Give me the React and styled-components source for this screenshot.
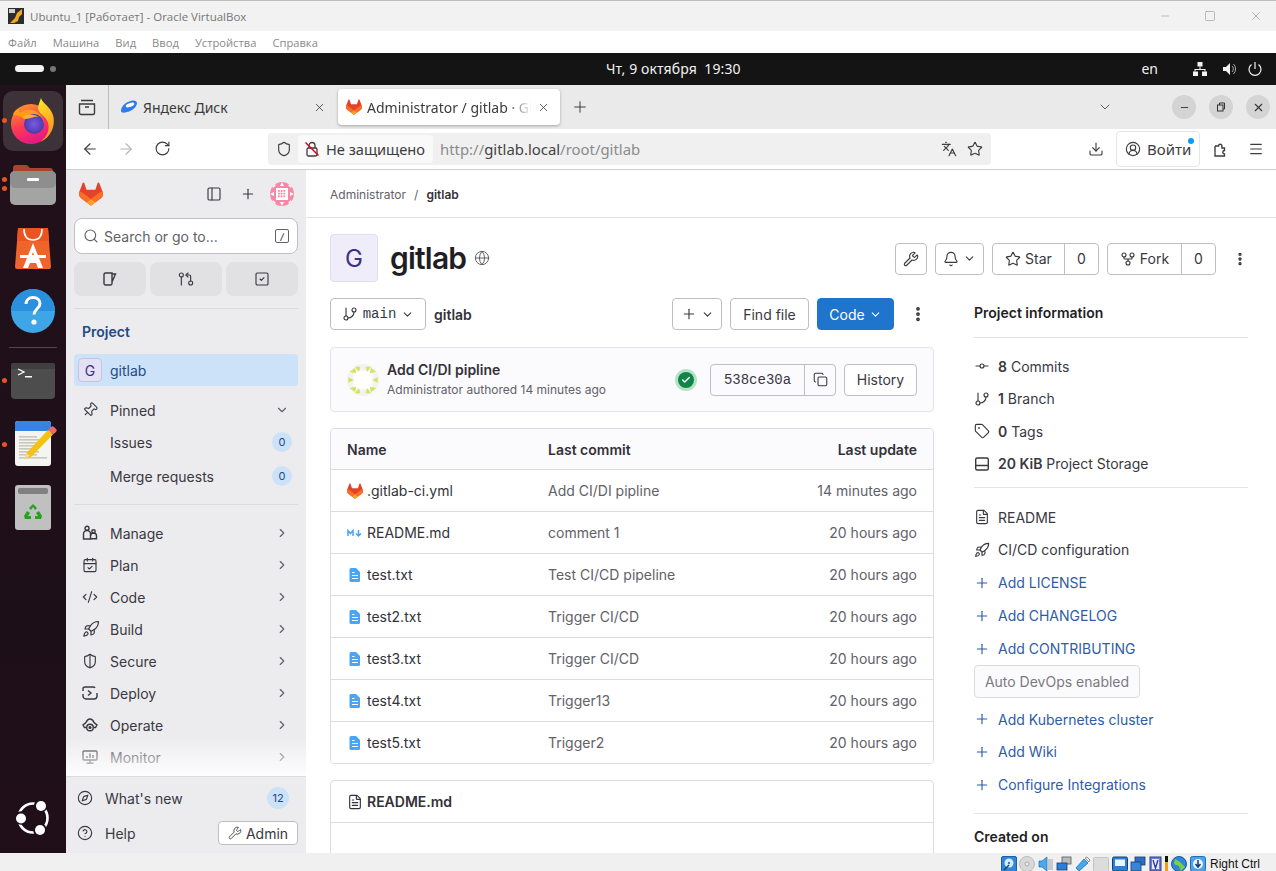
import React from "react";
import styled, { createGlobalStyle } from "styled-components";
import {
  Search, Plus, ChevronRight, ChevronDown, Pin, Wrench, Bell, Star, GitFork, GitBranch,
  GitCommitHorizontal, Tag, FileText, Rocket, Globe, Copy, Compass, CircleHelp, X,
  ArrowLeft, ArrowRight, RotateCw, Shield, Languages, Download, CircleUserRound, Menu,
  PanelLeft, SquareCheck, GitPullRequestArrow, CodeXml, CalendarCheck, ShieldHalf,
  EllipsisVertical, Minus, Square, Check,
} from "lucide-react";

const Global = createGlobalStyle`
  html, body { margin: 0; padding: 0; background: #fff; }
  body { font-family: Inter, "Liberation Sans", sans-serif; font-size: 14px; color: #333238; }
  * { box-sizing: border-box; }
`;

const Screen = styled.div`width:1276px;height:871px;display:flex;flex-direction:column;overflow:hidden;`;

/* VirtualBox chrome */
const TitleBar = styled.div`height:31px;background:#f2f2f2;border-top:1px solid #bdbdbd;display:flex;align-items:center;padding:0 8px;gap:6px;color:#777;font:11.5px "Open Sans","Noto Sans",sans-serif;`;
const TitleText = styled.span`flex:1;`;
const WinControls = styled.div`display:flex;gap:33px;align-items:center;margin-right:5px;color:#808080;`;
const MenuBar = styled.div`height:22px;background:#fff;display:flex;align-items:center;padding-left:8px;gap:16px;color:#8a8a8a;font:11.2px "Open Sans","Noto Sans",sans-serif;`;
const GnomeBar = styled.div`height:32px;background:#141414;position:relative;display:flex;align-items:center;padding:0 13px 1px 15px;color:#f2f2f2;font:14px "Noto Sans",sans-serif;`;
const Pill = styled.span`width:29px;height:7px;border-radius:4px;background:#f4f4f4;`;
const Dot = styled.span`width:6px;height:6px;border-radius:50%;background:#777;margin-left:6px;`;
const Clock = styled.span`position:absolute;left:606px;letter-spacing:.1px;`;
const Tray = styled.div`margin-left:auto;display:flex;align-items:center;gap:10px;`;
const Lang = styled.span`margin-right:24px;`;
const NetWrap = styled.span`display:flex;margin-right:3px;`;
const Desktop = styled.div`height:768px;display:flex;`;

/* Dock */
const Dock = styled.div`width:66px;background:linear-gradient(#22101b,#1d0f17 70%,#200f18);display:flex;flex-direction:column;align-items:center;position:relative;`;
const DockItem = styled.div`height:${p=>p.$h}px;width:60px;display:flex;align-items:center;justify-content:center;position:relative;margin-top:${p=>p.$mt||0}px;padding-left:${p=>p.$pl||0}px;flex:none;border-radius:10px;background:${p=>p.$active?"#3d3238":"transparent"};`;
const RunDot = styled.span`position:absolute;left:${p=>p.$l||2}px;top:${p=>p.$t}px;width:5px;height:5px;border-radius:50%;background:#e95420;`;
const DockRule = styled.div`width:48px;height:1px;background:#55464e;margin-top:10px;flex:none;`;
const DockBottom = styled.div`margin-top:auto;margin-bottom:17px;display:flex;`;

/* Firefox */
const Browser = styled.div`flex:1;display:flex;flex-direction:column;min-width:0;background:#fff;`;
const TabStrip = styled.div`height:44px;background:#eaeaea;display:flex;align-items:center;color:#3b3b3b;font:14px "Noto Sans",sans-serif;`;
const TabViews = styled.div`width:43px;height:44px;display:flex;align-items:center;justify-content:center;border-right:1px solid #bcbcbc;flex:none;`;
const Tab = styled.div`width:${p=>p.$w}px;height:36px;display:flex;align-items:center;gap:${p=>p.$gap||6}px;padding:0 10px 0 ${p=>p.$pl||12}px;flex:none;border-radius:4px;background:${p=>p.$active?"#fff":"transparent"};box-shadow:${p=>p.$active?"0 1px 3px rgba(0,0,0,.3)":"none"};margin-right:2px;`;
const TabLabel = styled.span`flex:1;white-space:nowrap;overflow:hidden;`;
const FadedLabel = styled(TabLabel)`-webkit-mask-image:linear-gradient(90deg,#000 85%,transparent);mask-image:linear-gradient(90deg,#000 85%,transparent);`;
const NewTab = styled.div`width:36px;display:flex;justify-content:center;`;
const StripEnd = styled.div`margin-left:auto;display:flex;align-items:center;`;
const WinBtn = styled.div`width:24px;height:24px;border-radius:50%;background:#d4d4d4;display:flex;align-items:center;justify-content:center;margin-right:${p=>p.$mr||13}px;color:#333;`;
const ListChevron = styled.div`margin-right:59px;display:flex;color:#444;`;
const NavBar = styled.div`height:41px;background:#fff;border-bottom:1px solid #cfcfcf;display:flex;align-items:center;color:#3d3d3d;font:14px "Noto Sans",sans-serif;padding-bottom:1px;`;
const NavBtn = styled.div`width:36px;display:flex;justify-content:center;color:${p=>p.$dim?"#b4b4b4":"#3d3d3d"};flex:none;`;
const NavGroup = styled.div`display:flex;margin-left:6px;margin-right:4px;`;
const UrlBar = styled.div`width:723px;height:32px;background:#f0f0f0;border-radius:4px;display:flex;align-items:center;padding:0 8px;margin-left:84px;flex:none;font-size:14.6px;`;
const Insecure = styled.div`height:28px;width:135px;margin-left:6px;background:#f9f9f9;border-radius:4px;display:flex;align-items:center;gap:6px;padding-left:6px;white-space:nowrap;`;
const UrlText = styled.span`color:#8b8b8b;margin-left:7px;flex:1;white-space:nowrap;font-size:14.9px;`;
const UrlHost = styled.b`color:#444;font-weight:400;`;
const UrlEnd = styled.div`display:flex;gap:10px;align-items:center;`;
const Login = styled.div`width:84px;height:36px;border:1px solid #e6e6e6;border-radius:4px;display:flex;align-items:center;gap:6px;padding-left:8px;position:relative;margin:0 2px;font-size:15px;`;
const Badge = styled.span`position:absolute;top:6px;right:5px;width:6px;height:6px;border-radius:50%;background:#0a9bf5;`;
const ToolEnd = styled.div`margin-left:auto;display:flex;align-items:center;padding-right:2px;`;

/* GitLab */
const Gitlab = styled.div`flex:1;min-height:0;display:flex;`;
const Sidebar = styled.aside`width:240px;flex:none;background:#ececef;display:flex;flex-direction:column;`;
const SideTop = styled.div`height:48px;padding:0 12px 0 13px;display:flex;align-items:center;flex:none;`;
const SideTopIcons = styled.div`margin-left:auto;display:flex;align-items:center;gap:18px;color:#3a383f;`;
const AvatarSlot = styled.span`display:flex;margin-left:-4px;`;
const SearchBox = styled.div`height:36px;margin:0 8px;background:#fff;border:1px solid #bfbfc3;border-radius:8px;display:flex;align-items:center;gap:5px;padding:0 8px;color:#626168;flex:none;`;
const SearchText = styled.span`flex:1;`;
const SlashKey = styled.span`width:14px;height:14px;border:1.5px solid #626168;border-radius:2px;font-size:9px;display:flex;align-items:center;justify-content:center;font-style:italic;font-weight:700;`;
const QuickRow = styled.div`display:grid;grid-template-columns:repeat(3,72px);gap:4px;margin:8px 8px 0;flex:none;`;
const QuickBtn = styled.div`height:34px;border-radius:8px;background:#e1e1e3;display:flex;align-items:center;justify-content:center;color:#3a383f;`;
const SideRule = styled.div`height:1px;background:#dcdcde;margin:12px 8px 0;flex:none;`;
const SideHead = styled.div`height:45px;display:flex;align-items:center;padding-left:16px;font-weight:600;color:#1f4a85;flex:none;`;
const CurrentRow = styled.div`height:32px;margin:0 8px;border-radius:4px;background:#cbe2f9;display:flex;align-items:center;padding-left:4px;gap:8px;color:#1f4a85;flex:none;`;
const MiniAvatar = styled.span`width:24px;height:24px;border-radius:4px;background:#e4e1f5;border:1px solid #c4c3e2;color:#41307f;display:flex;align-items:center;justify-content:center;`;
const NavArea = styled.div`flex:1;min-height:0;position:relative;overflow:hidden;`;
const NavRow = styled.div`height:32px;margin:${p=>p.$m||0};padding:0 16px;display:flex;align-items:center;color:#3a383f;flex:none;`;
const NavIcon = styled.span`width:28px;display:flex;flex:none;`;
const TiltedIcon = styled(NavIcon)`& > svg{transform:rotate(45deg);}`;
const NavLabel = styled.span`flex:1;`;
const Chev = styled.span`display:flex;color:#626168;margin-right:1px;`;
const Count = styled.span`min-width:20px;height:20px;border-radius:10px;background:#cbe2f9;color:#1f4a85;font-size:11px;display:flex;align-items:center;justify-content:center;margin-right:-2px;`;
const BigCount = styled(Count)`min-width:22px;height:22px;border-radius:11px;margin-right:9px;`;
const Fade = styled.div`position:absolute;left:0;right:0;bottom:0;height:40px;background:linear-gradient(rgba(255,255,255,0),rgba(255,255,255,.9));pointer-events:none;`;
const SideFoot = styled.div`height:77px;border-top:1px solid #dcdcde;padding:5px 8px 0 11px;flex:none;display:flex;flex-direction:column;gap:3px;`;
const FootRow = styled.div`height:32px;display:flex;align-items:center;color:#3a383f;`;
const FootIcon = styled.span`width:28px;display:flex;`;
const AdminBtn = styled.span`width:80px;height:24px;background:#fff;border:1px solid #bfbfc3;border-radius:4px;display:flex;align-items:center;justify-content:center;gap:4px;`;

const Main = styled.main`flex:1;min-width:0;overflow:hidden;background:#fff;`;
const Crumbs = styled.div`height:48px;border-bottom:1px solid #e4e4e6;padding:1px 0 0 24px;display:flex;align-items:center;gap:8px;font-size:12px;color:#626168;`;
const CrumbNow = styled.b`color:#333238;font-weight:600;`;
const Body = styled.div`padding:16px 28px 0 24px;`;
const TitleRow = styled.div`height:48px;display:flex;align-items:center;`;
const BigAvatar = styled.span`width:48px;height:48px;border-radius:4px;background:#f0edfb;border:1px solid #e0dff0;color:#41307f;font-size:24px;display:flex;align-items:center;justify-content:center;flex:none;`;
const H1 = styled.h1`margin:0 8px 0 12px;font-size:30px;line-height:48px;font-weight:600;color:#1f1e24;letter-spacing:-.8px;`;
const Actions = styled.div`margin-left:auto;display:flex;gap:8px;align-items:center;margin-top:1px;`;
const Btn = styled.div`height:32px;width:${p=>p.$w}px;margin-left:${p=>p.$ml||0}px;border:1px solid #bfbfc3;border-radius:4px;background:#fff;display:flex;align-items:center;justify-content:center;gap:${p=>p.$gap||4}px;color:#3a383f;flex:none;`;
const Primary = styled(Btn)`background:#1f75cb;border-color:#1f75cb;color:#fff;`;
const Split = styled.div`display:flex;height:32px;border:1px solid #bfbfc3;border-radius:4px;flex:none;color:#3a383f;`;
const SplitPart = styled.div`width:${p=>p.$w}px;display:flex;align-items:center;justify-content:center;gap:4px;border-left:${p=>p.$div?"1px solid #bfbfc3":"none"};`;
const Kebab = styled.div`width:${p=>p.$w||16}px;display:flex;justify-content:center;margin-left:${p=>p.$ml||0}px;color:#333238;`;
const Columns = styled.div`display:grid;grid-template-columns:604px 274px;column-gap:40px;margin-top:16px;`;
const LeftCol = styled.div`display:flex;flex-direction:column;min-width:0;`;
const BranchRow = styled.div`height:32px;display:flex;align-items:center;gap:8px;`;
const Mono = styled.span`font-family:"Liberation Mono","DejaVu Sans Mono",monospace;font-size:14px;`;
const PathName = styled.b`font-weight:600;flex:1;`;
const CommitBox = styled.div`height:65px;margin-top:17px;border:1px solid #e4e4e6;border-radius:4px;background:#fbfafd;display:flex;align-items:center;padding:0 16px;`;
const CommitText = styled.div`margin-left:8px;flex:1;line-height:20px;`;
const CommitTitle = styled.div`font-weight:600;color:#333238;`;
const CommitMeta = styled.div`font-size:12px;color:#626168;`;
const Status = styled.span`width:22px;height:22px;border-radius:50%;background:#b6e2c5;display:flex;align-items:center;justify-content:center;margin-right:13px;`;
const StatusCore = styled.span`width:16px;height:16px;border-radius:50%;background:#108548;color:#fff;display:flex;align-items:center;justify-content:center;`;
const TableBox = styled.div`margin-top:16px;border:1px solid #dcdcde;border-radius:4px;overflow:hidden;`;
const TRow = styled.div`height:${p=>p.$head?40:42}px;display:grid;grid-template-columns:201px 1fr auto;align-items:center;padding:0 16px;border-top:${p=>p.$head?"none":"1px solid #dcdcde"};background:${p=>p.$head?"#fbfafd":"#fff"};`;
const ThCell = styled.b`font-weight:600;color:#333238;`;
const FileCell = styled.span`display:flex;align-items:center;gap:4px;color:#333238;`;
const Muted = styled.span`color:#626168;`;
const ReadmeBox = styled.div`margin-top:16px;border:1px solid #dcdcde;border-radius:4px;height:200px;`;
const ReadmeHead = styled.div`height:42px;border-bottom:1px solid #dcdcde;display:flex;align-items:center;gap:4px;padding-left:16px;font-weight:600;`;
const RightCol = styled.div`display:flex;flex-direction:column;`;
const InfoHead = styled.div`height:28px;display:flex;align-items:center;font-weight:600;color:#1f1e24;flex:none;`;
const InfoRule = styled.div`height:1px;background:#e4e4e6;flex:none;margin:${p=>p.$m};`;
const InfoRow = styled.div`height:${p=>p.$h||32}px;margin-top:${p=>p.$mt||0}px;display:flex;align-items:center;gap:8px;color:${p=>p.$link?"#2f5ca5":"#3a383f"};flex:none;`;
const InfoNum = styled.b`font-weight:600;`;
const IconBox = styled.span`width:16px;height:16px;display:flex;flex:none;`;
const DevOps = styled.div`width:166px;height:33px;border:1px solid #dcdcde;border-radius:4px;background:#fbfafd;color:#7b7a80;display:flex;align-items:center;justify-content:center;flex:none;`;
const StatusBar = styled.div`height:18px;background:#f0f0f0;display:flex;align-items:center;justify-content:flex-end;padding:3px 4px 0 0;gap:2.5px;font:12px "Liberation Sans",sans-serif;color:#111;flex:none;`;
const CtrlText = styled.span`margin:0 12px 0 1.5px;`;
const Blacky = styled.span`width:3px;height:15px;background:linear-gradient(#111 40%,#f39c12 40%);margin:0 1px 0 -2.5px;`;

const s = { size:16, strokeWidth:1.7 };

const Tanuki = ({size=24}) => (
  <svg width={size} height={size} viewBox="0 0 25 24" style={{flex:"none"}}>
    <path d="m24.507 9.5-.034-.09L21.082.562a.896.896 0 0 0-1.694.091l-2.29 7.01H7.825L5.535.653a.898.898 0 0 0-1.694-.09L.451 9.411.416 9.5a6.297 6.297 0 0 0 2.09 7.278l.012.01.03.022 5.16 3.867 2.56 1.935 1.554 1.176a1.051 1.051 0 0 0 1.268 0l1.555-1.176 2.56-1.935 5.197-3.89.014-.01A6.297 6.297 0 0 0 24.507 9.5Z" fill="#E24329"/>
    <path d="m24.507 9.5-.034-.09a11.44 11.44 0 0 0-4.56 2.051l-7.447 5.632 4.742 3.584 5.197-3.89.014-.01A6.297 6.297 0 0 0 24.507 9.5Z" fill="#FC6D26"/>
    <path d="m7.707 20.677 2.56 1.935 1.555 1.176a1.051 1.051 0 0 0 1.268 0l1.555-1.176 2.56-1.935-4.743-3.584-4.755 3.584Z" fill="#FCA326"/>
    <path d="M5.01 11.461a11.43 11.43 0 0 0-4.56-2.05L.416 9.5a6.297 6.297 0 0 0 2.09 7.278l.012.01.03.022 5.16 3.867 4.745-3.584-7.444-5.632Z" fill="#FC6D26"/>
  </svg>
);

const Identicon = ({size, bg, fg, kind}) => (
  <svg width={size} height={size} viewBox="0 0 24 24" style={{flex:"none"}}>
    <defs><clipPath id={"c"+kind}><circle cx="12" cy="12" r="12"/></clipPath></defs>
    <g clipPath={`url(#c${kind})`}>
      <rect width="24" height="24" fill={bg}/>
      {kind==="pink" ? (<>
        <rect x="6" y="6" width="12" height="12" fill={fg}/>
        {[8,10.7,13.4].map(x=>[8,10.7,13.4].map(y=><rect key={x+"-"+y} x={x} y={y} width="1.8" height="1.8" fill={bg}/>))}
        <path d="M0 0l6 3-3 3zM24 0l-6 3 3 3zM0 24l6-3-3-3zM24 24l-6-3 3-3zM12 0l2 4h-4zM12 24l2-4h-4zM0 12l4-2v4zM24 12l-4-2v4z" fill={fg}/>
      </>) : (<>
        <rect x="5" y="5" width="14" height="14" fill="#fff"/>
        <path d="M2 6l4-3 1 4zM6 2h4l-1 4zM14 2h4l-3 4zM18 3l4 3-5 1zM2 18l4 3 1-4zM6 22h4l-1-4zM14 22h4l-3-4zM18 21l4-3-5-1zM1 10l4 2-4 2zM23 10l-4 2 4 2z" fill={fg}/>
      </>)}
    </g>
  </svg>
);

const FirefoxIcon = () => (
  <svg width="46" height="46" viewBox="0 0 46 46">
    <defs>
      <linearGradient id="ffa" x1="0.2" y1="0" x2="0.6" y2="1"><stop offset="0" stopColor="#ff9b24"/><stop offset=".5" stopColor="#ff3b54"/><stop offset="1" stopColor="#e31587"/></linearGradient>
      <linearGradient id="ffb" x1="0.3" y1="0" x2="0.7" y2="1"><stop offset="0" stopColor="#ffe226"/><stop offset="1" stopColor="#ff8a1f"/></linearGradient>
      <radialGradient id="ffc"><stop offset="0" stopColor="#7a5be0"/><stop offset="1" stopColor="#4a3ab0"/></radialGradient>
    </defs>
    <circle cx="21" cy="26" r="20" fill="url(#ffa)"/>
    <path d="M31 0c1 5 9 8 12 17 3 10-2 23-13 27 7-5 10-12 8-19-1-6-8-8-10-14 0-4 2-8 3-11z" fill="url(#ffb)"/>
    <path d="M3 16c2-4 4-5 6-6-1 3 0 4 1 5 4-4 10-4 15-2 4 2 9 6 9 13-2-5-7-8-13-7-4 0-8 1-12-1-2-1-5 0-6-2z" fill="#ff9a1e"/>
    <circle cx="24" cy="26" r="10" fill="url(#ffc)"/>
    <path d="M12 19c4-3 12-3 17 0-6-1-8 2-14 2-1 0-2-1-3-2z" fill="#ffb02e"/>
  </svg>
);

const FilesIcon = () => (
  <svg width="46" height="42" viewBox="0 0 46 42">
    <path d="M3 4a3 3 0 0 1 3-3h11l3 3h20a3 3 0 0 1 3 3v6H3z" fill="#a5452f"/>
    <rect x="0" y="7" width="46" height="34" rx="5" fill="#a4a4a4"/>
    <rect x="0" y="7" width="46" height="17" rx="5" fill="#8e8e8e"/>
    <rect x="17" y="14" width="12" height="3" rx="1" fill="#fff"/>
  </svg>
);
const StoreIcon = () => (
  <svg width="36" height="42" viewBox="0 0 36 42">
    <path d="M3 1h30l3 39a2 2 0 0 1-2 2H2a2 2 0 0 1-2-2z" fill="#f0642c"/>
    <path d="M3 1h30l1 13H2z" fill="#e95420"/>
    <path d="M9 2c0 8 4 11 9 11s9-3 9-11" fill="none" stroke="#fff" strokeWidth="1.6"/>
    <path d="M18 16L8 41h5l2-5h6l2 5h5zM16 31l2-6 2 6z" fill="#fff"/>
    <rect x="5" y="28" width="26" height="3" fill="#fff"/>
  </svg>
);
const HelpIcon = () => (
  <svg width="44" height="44" viewBox="0 0 44 44">
    <circle cx="22" cy="22" r="22" fill="#3ea6e6"/>
    <path d="M0 22a22 22 0 0 1 44 0z" fill="#2a8fdc"/>
    <path d="M15 15c0-4 3-6.500 7-6.500s7 2.500 7 6c0 5-6 5.500-6 11" fill="none" stroke="#fff" strokeWidth="3"/>
    <circle cx="23" cy="33" r="2.600" fill="#fff"/>
  </svg>
);
const TermIcon = () => (
  <svg width="44" height="36" viewBox="0 0 44 36">
    <rect width="44" height="36" rx="4" fill="#4d4d4d"/>
    <path d="M2 0h40a2 2 0 0 1 2 2v4H0V2a2 2 0 0 1 2-2z" fill="#3f3f3f"/>
    <path d="M7 6l6 3-6 3" fill="none" stroke="#fff" strokeWidth="1.300"/>
    <rect x="14" y="13" width="7" height="1.500" fill="#fff"/>
  </svg>
);
const GeditIcon = () => (
  <svg width="44" height="46" viewBox="0 0 44 46">
    <rect x="0" y="0" width="36" height="45" rx="3" fill="#f4f4f2"/>
    <path d="M0 3a3 3 0 0 1 3-3h30a3 3 0 0 1 3 3v7H0z" fill="#3584e4"/>
    {[15,18,21,24,27,30,33,36].map((y,i)=><rect key={y} x="4" y={y} width={i===7?28:(i%2?20:18)} height="1.600" fill="#c9c6bb"/>)}
    <path d="M9 38l2.500-6L33 9l5 4.500L16 36z" fill="#f5c211"/>
    <path d="M33 9l3-3a2 2 0 0 1 3 0l2 2a2 2 0 0 1 0 3l-3 2.500z" fill="#ed6a6a"/>
    <path d="M9 38l2.500-6 3.500 3z" fill="#f0d9a8"/>
  </svg>
);
const TrashIcon = () => (
  <svg width="36" height="45" viewBox="0 0 36 45">
    <rect width="36" height="45" rx="3" fill="#c0c0c0"/>
    <rect x="3" y="3" width="30" height="6" rx="2" fill="#808080"/>
    <path d="M18 19l4 4-2 2-2-3-2 3-2-2zM9 31l3-5 3 2-2 3h3v3H10zM27 31l-3-5-3 2 2 3h-3v3h6z" fill="#26a31c"/>
  </svg>
);
const UbuntuLogo = () => (
  <svg width="36" height="36" viewBox="0 0 36 36">
    <circle cx="18" cy="18" r="14.500" fill="none" stroke="#fff" strokeWidth="2.600"/>
    {[[25.500,6],[6,18],[25,30]].map(([x,y])=><circle key={x} cx={x} cy={y} r="6.800" fill="#1d0f17"/>)}
    {[[26,6],[6,18.500],[25,30]].map(([x,y])=><circle key={y} cx={x} cy={y} r="5" fill="#fff"/>)}
  </svg>
);
const YaDisk = () => (
  <svg width="16" height="16" viewBox="0 0 16 16" style={{flex:"none"}}>
    <path d="M0 12c0-5 5-9 10-10 3-1 6 0 6 2 0 3-4 8-10 9-3 1-6 1-6-1z" fill="#2f7af0"/>
    <ellipse cx="9" cy="6" rx="4.500" ry="1.800" transform="rotate(-20 9 6)" fill="#fff"/>
  </svg>
);
const BlueFile = () => (
  <svg width="16" height="16" viewBox="0 0 16 16" style={{flex:"none"}}>
    <path d="M4 1h5l4 4v8.500a1.500 1.500 0 0 1-1.500 1.500h-7.500A1.500 1.500 0 0 1 2.500 13.500V2.500A1.500 1.500 0 0 1 4 1z" fill="#4aa5f5"/>
    <path d="M5 8.500h6M5 11.500h6M5 5.500h2.500" stroke="#fff" strokeWidth="1"/>
  </svg>
);
const MdFile = () => (
  <svg width="16" height="16" viewBox="0 0 16 16" style={{flex:"none"}}>
    <path d="M1 11V5.500l2.500 3 2.500-3V11" fill="none" stroke="#4aa5f5" strokeWidth="1.500"/>
    <path d="M11.500 5v5M9 8.500l2.500 2.500L14 8.500" fill="none" stroke="#4aa5f5" strokeWidth="1.500"/>
  </svg>
);
const Line = ({children}) => (
  <svg width="16" height="16" viewBox="0 0 16 16" fill="none" stroke="currentColor" strokeWidth="1.400" style={{flex:"none"}}>{children}</svg>
);
const IssueIcon = () => <Line><path d="M3.500 2h6.500v10.500a1.500 1.500 0 0 1-1.500 1.500h-5A1.500 1.500 0 0 1 2 12.500v-9A1.500 1.500 0 0 1 3.500 2zM10 3h3.500l-3.500 8"/></Line>;
const DeployIcon = () => <Line><path d="M1 6V4a2 2 0 0 1 2-2h8a2 2 0 0 1 2 1M15 8v3a3 3 0 0 1-3 3H4a3 3 0 0 1-3-3V9"/><path d="M6 5.500L9 8l-3 2.500"/></Line>;
const ManageIcon = () => <Line><circle cx="5" cy="3.300" r="2"/><path d="M1.500 9a3.500 3.500 0 0 1 7 0v5h-7z"/><circle cx="11.500" cy="6.500" r="1.700"/><path d="M8.500 13.800h6v-2.800a3 3 0 0 0-6 0"/></Line>;
const MonitorIcon = () => <Line><rect x="1" y="2" width="14" height="9" rx="1"/><path d="M5 9V7M8 9V4.500M11 9V6M8 11v3M4.500 14.300h7"/></Line>;
const OperateIcon = () => <Line><path d="M4 10.500H2.500L1 8l3-2.500C5 3 6.500 2 8 2s3 1 4 3.500L15 8l-1.500 2.500H12"/><circle cx="8" cy="10.500" r="3.300"/><circle cx="8" cy="10.500" r=".9" fill="currentColor"/></Line>;
const StorageIcon = () => <Line><rect x="1.700" y="2" width="12.600" height="12" rx="1.500"/><path d="M1.700 9.500h12.600M10 11.800h.1M12 11.800h.1"/></Line>;
const ExtensionIcon = () => <Line><path d="M3 5h3.500a1.700 1.700 0 1 1 3.400 0V7h2.600v2.500a1.700 1.700 0 0 0 0 3.400V15H3v-3.500"/><path d="M3 11.500V5"/></Line>;
const InsecureLock = () => (
  <svg width="16" height="16" viewBox="0 0 16 16" fill="none" style={{flex:"none"}}>
    <rect x="3" y="7" width="10" height="8" rx="1.500" stroke="#3d3d3d" strokeWidth="1.300"/>
    <path d="M5 7V4.500a3 3 0 0 1 6 0V7" stroke="#3d3d3d" strokeWidth="1.300"/>
    <path d="M1.500 1.500l13 13" stroke="#d70022" strokeWidth="1.400"/>
  </svg>
);
const Speaker = () => (
  <svg width="16" height="16" viewBox="0 0 16 16" fill="#f2f2f2"><path d="M2 6h3l4-4v12l-4-4H2z"/><path d="M11 5a4 4 0 0 1 0 6M12.500 3a7 7 0 0 1 0 10" fill="none" stroke="#aaa" strokeWidth="1"/></svg>
);
const NetIcon = () => (
  <svg width="16" height="16" viewBox="0 0 16 16" fill="#f2f2f2"><rect x="5.500" y="1" width="5" height="4.500"/><rect x="1" y="10.500" width="5" height="4.500"/><rect x="10" y="10.500" width="5" height="4.500"/><path d="M7.500 5.500h1V8h5v2.500h-1V9h-9v1.500h-1V8h5z"/></svg>
);
const Power = () => (
  <svg width="16" height="16" viewBox="0 0 16 16" fill="none" stroke="#f2f2f2" strokeWidth="1.200"><path d="M4.500 3.500a6 6 0 1 0 7 0M8 1v7"/></svg>
);
const VBoxIcon = () => (
  <svg width="16" height="16" viewBox="0 0 16 16" style={{flex:"none"}}>
    <rect width="16" height="16" fill="#2c2c2c"/><path d="M2 15l5-5 2-5 5-4v5l-3 3-1 4-4 2z" fill="#f5a623"/><rect x="1" y="1" width="6" height="4" fill="#d0d0d0"/>
  </svg>
);

const Tiny = ({kind}) => {
  const blue = "#2a7fd6";
  const map = {
    hd: <><rect x=".5" y=".5" width="15" height="15" rx="1.500" fill="#2f87dc" stroke="#1c5fa8"/><circle cx="8" cy="7" r="4.500" fill="#d9ecfb"/><circle cx="8" cy="7" r="1.200" fill={blue}/><path d="M3 14l5-5" stroke="#0f3f7a" strokeWidth="1.500"/></>,
    cd: <><circle cx="8" cy="8" r="7.500" fill="#d8d8d8" stroke="#bbb"/><circle cx="8" cy="8" r="2" fill="#eee" stroke="#aaa"/></>,
    audio: <><path d="M1 5h3l5-4v14l-5-4H1z" fill="#49a9ee" stroke="#1c6fb8" strokeWidth=".7"/><rect x="10" y="3" width="5" height="11" fill="#c9c9c9"/></>,
    net: <><rect x="6" y="1" width="9" height="7" fill="#bbb" stroke="#555" strokeWidth=".8"/><rect x="1" y="7" width="10" height="7" fill={blue} stroke="#123e78" strokeWidth=".8"/></>,
    usb: <><path d="M1 12l8-9 4 4-9 8z" fill="#45a8ee" stroke="#1c6fb8" strokeWidth=".8"/><path d="M10 2l2-1 3 3-1 2z" fill="#eee" stroke="#777" strokeWidth=".8"/></>,
    folder: <rect x=".5" y="1.500" width="15" height="14" rx="1" fill="#dcdcdc" stroke="#c6c6c6"/>,
    disp: <><rect x=".5" y="1" width="15" height="14" rx="1.500" fill={blue} stroke="#123e78"/><rect x="3" y="3.500" width="10" height="6.500" fill="#e8f3fc"/></>,
    cap: <><rect x="5" y="1" width="10" height="8" fill="#2e6fc4" stroke="#123e78" strokeWidth=".8"/><rect x="1" y="6" width="10" height="9" fill="#3a84d8" stroke="#123e78" strokeWidth=".8"/></>,
    v: <><rect x="1" y="1" width="11" height="14" fill="#6e7fd0" stroke="#2d3a90"/><rect x="3" y="3" width="7" height="10" fill="#e8e8f8"/><path d="M4 4l2.500 8L9 4" fill="none" stroke="#2d3a90" strokeWidth="1.300"/></>,
    globe: <><circle cx="8" cy="8" r="7.500" fill="#2f87dc" stroke="#185a9e"/><path d="M4 3l5 3 5 5-4 4-2-5-5-2z" fill="#7bd13f"/></>,
    down: <><rect x=".5" y=".5" width="15" height="15" rx="2" fill="#4ea1ea" stroke="#1c6fb8"/><circle cx="8" cy="8" r="5" fill="#e8f3fc"/><path d="M8 4v6M5.500 8L8 11l2.500-3" fill="none" stroke="#123e78" strokeWidth="1.500"/></>,
  };
  return <svg width="16" height="16" viewBox="0 0 16 16" style={{flex:"none"}}>{map[kind]}</svg>;
};

const navItems = [
  ["Manage", <ManageIcon/>], ["Plan", <CalendarCheck {...s}/>], ["Code", <CodeXml {...s}/>],
  ["Build", <Rocket size={18} strokeWidth={1.600}/>], ["Secure", <ShieldHalf {...s}/>], ["Deploy", <DeployIcon/>],
  ["Operate", <OperateIcon/>], ["Monitor", <MonitorIcon/>],
];
const files = [
  [<Tanuki size={16}/>, ".gitlab-ci.yml", "Add CI/DI pipline", "14 minutes ago"],
  [<MdFile/>, "README.md", "comment 1", "20 hours ago"],
  [<BlueFile/>, "test.txt", "Test CI/CD pipeline", "20 hours ago"],
  [<BlueFile/>, "test2.txt", "Trigger CI/CD", "20 hours ago"],
  [<BlueFile/>, "test3.txt", "Trigger CI/CD", "20 hours ago"],
  [<BlueFile/>, "test4.txt", "Trigger13", "20 hours ago"],
  [<BlueFile/>, "test5.txt", "Trigger2", "20 hours ago"],
];

export default function App() {
  return (
    <Screen>
      <Global/>
      <TitleBar>
        <VBoxIcon/>
        <TitleText>Ubuntu_1 [Работает] - Oracle VirtualBox</TitleText>
        <WinControls><Minus size={12} strokeWidth={1}/><Square size={12} strokeWidth={1}/><X size={14} strokeWidth={1}/></WinControls>
      </TitleBar>
      <MenuBar>
        <span>Файл</span><span>Машина</span><span>Вид</span><span>Ввод</span><span>Устройства</span><span>Справка</span>
      </MenuBar>
      <GnomeBar>
        <Pill/><Dot/>
        <Clock>Чт, 9 октября&nbsp;&nbsp;19:30</Clock>
        <Tray><Lang>en</Lang><NetWrap><NetIcon/></NetWrap><Speaker/><Power/></Tray>
      </GnomeBar>
      <Desktop>
        <Dock>
          <DockItem $h={60} $mt={6} $active><FirefoxIcon/></DockItem>
          <DockItem $h={52} $mt={8}><FilesIcon/></DockItem>
          <DockItem $h={52} $mt={11}><StoreIcon/></DockItem>
          <DockItem $h={52} $mt={11}><HelpIcon/></DockItem>
          <DockRule/>
          <DockItem $h={52} $mt={7}><TermIcon/></DockItem>
          <DockItem $h={52} $mt={11} $pl={8}><GeditIcon/></DockItem>
          <DockItem $h={52} $mt={11}><TrashIcon/></DockItem>
          <RunDot $t={33} />
          <RunDot $t={92} />
          <RunDot $t={101} />
          <RunDot $t={293} />
          <RunDot $t={357} />
          <DockBottom><UbuntuLogo/></DockBottom>
        </Dock>
        <Browser>
          <TabStrip>
            <TabViews>
              <svg width="18" height="18" viewBox="0 0 18 18" fill="none" stroke="#3b3b3b" strokeWidth="1.400"><path d="M3 2.500h12M1.500 6h15v9a1.500 1.500 0 0 1-1.500 1.500H3A1.500 1.500 0 0 1 1.500 15zM7 9h4"/></svg>
            </TabViews>
            <Tab $w={227}>
              <YaDisk/><TabLabel>Яндекс Диск</TabLabel><X size={13} strokeWidth={1.500}/>
            </Tab>
            <Tab $active $w={222} $pl={8} $gap={5}>
              <Tanuki size={16}/><FadedLabel>Administrator / gitlab · GitLab</FadedLabel><X size={13} strokeWidth={1.500}/>
            </Tab>
            <NewTab><Plus size={18} strokeWidth={1.300}/></NewTab>
            <StripEnd>
              <ListChevron><ChevronDown size={16} strokeWidth={1.300}/></ListChevron>
              <WinBtn><Minus size={11}/></WinBtn>
              <WinBtn><svg width="10" height="10" viewBox="0 0 10 10" fill="none" stroke="#333"><rect x="1.500" y="3" width="5.500" height="6"/><path d="M3.500 3V1h5v6H7"/></svg></WinBtn>
              <WinBtn $mr={6}><X size={13}/></WinBtn>
            </StripEnd>
          </TabStrip>
          <NavBar>
            <NavGroup>
              <NavBtn><ArrowLeft size={18} strokeWidth={1.500}/></NavBtn>
              <NavBtn $dim><ArrowRight size={18} strokeWidth={1.500}/></NavBtn>
              <NavBtn><RotateCw size={17} strokeWidth={1.600}/></NavBtn>
            </NavGroup>
            <UrlBar>
              <Shield {...s}/>
              <Insecure>
                <InsecureLock/>
                <span>Не защищено</span>
              </Insecure>
              <UrlText>http://<UrlHost>gitlab.local</UrlHost>/root/gitlab</UrlText>
              <UrlEnd><Languages {...s}/><Star {...s}/></UrlEnd>
            </UrlBar>
            <ToolEnd>
              <NavBtn><Download {...s}/></NavBtn>
              <Login><CircleUserRound {...s}/><span>Войти</span><Badge/></Login>
              <NavBtn><ExtensionIcon/></NavBtn>
              <NavBtn><Menu {...s}/></NavBtn>
            </ToolEnd>
          </NavBar>
          <Gitlab>
            <Sidebar>
              <SideTop>
                <Tanuki size={24}/>
                <SideTopIcons>
                  <PanelLeft {...s}/><Plus {...s}/>
                  <AvatarSlot><Identicon size={24} bg="#f589a6" fg="#ffffff" kind="pink"/></AvatarSlot>
                </SideTopIcons>
              </SideTop>
              <SearchBox>
                <Search {...s}/><SearchText>Search or go to...</SearchText><SlashKey>/</SlashKey>
              </SearchBox>
              <QuickRow>
                <QuickBtn><IssueIcon/></QuickBtn>
                <QuickBtn><GitPullRequestArrow {...s}/></QuickBtn>
                <QuickBtn><SquareCheck {...s}/></QuickBtn>
              </QuickRow>
              <SideRule/>
              <NavArea>
                <SideHead>Project</SideHead>
                <CurrentRow><MiniAvatar>G</MiniAvatar><span>gitlab</span></CurrentRow>
                <NavRow $m="8px 0 0"><TiltedIcon><Pin {...s}/></TiltedIcon><NavLabel>Pinned</NavLabel><Chev><ChevronDown size={14}/></Chev></NavRow>
                <NavRow><NavIcon/><NavLabel>Issues</NavLabel><Count>0</Count></NavRow>
                <NavRow $m="2px 0 0"><NavIcon/><NavLabel>Merge requests</NavLabel><Count>0</Count></NavRow>
                <SideRule/>
                <NavRow $m="12px 0 0"><NavIcon>{navItems[0][1]}</NavIcon><NavLabel>{navItems[0][0]}</NavLabel><Chev><ChevronRight size={14}/></Chev></NavRow>
                {navItems.slice(1).map(([label, icon]) => (
                  <NavRow key={label}><NavIcon>{icon}</NavIcon><NavLabel>{label}</NavLabel><Chev><ChevronRight size={14}/></Chev></NavRow>
                ))}
                <Fade/>
              </NavArea>
              <SideFoot>
                <FootRow><FootIcon><Compass {...s}/></FootIcon><NavLabel>What's new</NavLabel><BigCount>12</BigCount></FootRow>
                <FootRow><FootIcon><CircleHelp {...s}/></FootIcon><NavLabel>Help</NavLabel><AdminBtn><Wrench size={14} strokeWidth={1.500}/>Admin</AdminBtn></FootRow>
              </SideFoot>
            </Sidebar>
            <Main>
              <Crumbs><span>Administrator</span><span>/</span><CrumbNow>gitlab</CrumbNow></Crumbs>
              <Body>
                <TitleRow>
                  <BigAvatar>G</BigAvatar>
                  <H1>gitlab</H1>
                  <Globe size={16} strokeWidth={1.500} color="#626168"/>
                  <Actions>
                    <Btn $w={32}><Wrench {...s}/></Btn>
                    <Btn $w={49}><Bell {...s}/><ChevronDown size={13}/></Btn>
                    <Split>
                      <SplitPart $w={71}><Star {...s}/>Star</SplitPart>
                      <SplitPart $w={34} $div>0</SplitPart>
                    </Split>
                    <Split>
                      <SplitPart $w={73}><GitFork {...s}/>Fork</SplitPart>
                      <SplitPart $w={34} $div>0</SplitPart>
                    </Split>
                    <Kebab $ml={8}><EllipsisVertical size={18} strokeWidth={3}/></Kebab>
                  </Actions>
                </TitleRow>
                <Columns>
                  <LeftCol>
                    <BranchRow>
                      <Btn $w={96} $gap={5}><GitBranch {...s}/><Mono>main</Mono><ChevronDown size={13}/></Btn>
                      <PathName>gitlab</PathName>
                      <Btn $w={50}><Plus {...s}/><ChevronDown size={13}/></Btn>
                      <Btn $w={79}>Find file</Btn>
                      <Primary $w={77}>Code<ChevronDown size={13}/></Primary>
                      <Kebab $w={32}><EllipsisVertical size={18} strokeWidth={3}/></Kebab>
                    </BranchRow>
                    <CommitBox>
                      <Identicon size={32} bg="#f3f3f3" fg="#d5e35a" kind="lime"/>
                      <CommitText>
                        <CommitTitle>Add CI/DI pipline</CommitTitle>
                        <CommitMeta>Administrator authored 14 minutes ago</CommitMeta>
                      </CommitText>
                      <Status><StatusCore><Check size={10} strokeWidth={3.500}/></StatusCore></Status>
                      <Split>
                        <SplitPart $w={93}><Mono>538ce30a</Mono></SplitPart>
                        <SplitPart $w={31} $div><Copy size={15} strokeWidth={1.700}/></SplitPart>
                      </Split>
                      <Btn $w={73} $ml={8}>History</Btn>
                    </CommitBox>
                    <TableBox>
                      <TRow $head><ThCell>Name</ThCell><ThCell>Last commit</ThCell><ThCell>Last update</ThCell></TRow>
                      {files.map(([icon, name, msg, when]) => (
                        <TRow key={name}>
                          <FileCell>{icon}{name}</FileCell>
                          <Muted>{msg}</Muted>
                          <Muted>{when}</Muted>
                        </TRow>
                      ))}
                    </TableBox>
                    <ReadmeBox>
                      <ReadmeHead><FileText {...s}/>README.md</ReadmeHead>
                    </ReadmeBox>
                  </LeftCol>
                  <RightCol>
                    <InfoHead>Project information</InfoHead>
                    <InfoRule $m="11px 0 12px"/>
                    <InfoRow $h={32.500}><IconBox><GitCommitHorizontal {...s}/></IconBox><span><InfoNum>8</InfoNum> Commits</span></InfoRow>
                    <InfoRow $h={32.500}><IconBox><GitBranch {...s}/></IconBox><span><InfoNum>1</InfoNum> Branch</span></InfoRow>
                    <InfoRow $h={32.500}><IconBox><Tag {...s}/></IconBox><span><InfoNum>0</InfoNum> Tags</span></InfoRow>
                    <InfoRow $h={32.500}><IconBox><StorageIcon/></IconBox><span><InfoNum>20 KiB</InfoNum> Project Storage</span></InfoRow>
                    <InfoRule $m="7px 0 13px"/>
                    <InfoRow><IconBox><FileText {...s}/></IconBox>README</InfoRow>
                    <InfoRow $h={33}><IconBox><Rocket {...s}/></IconBox>CI/CD configuration</InfoRow>
                    <InfoRow $link $h={33}><IconBox><Plus {...s}/></IconBox>Add LICENSE</InfoRow>
                    <InfoRow $link $h={33}><IconBox><Plus {...s}/></IconBox>Add CHANGELOG</InfoRow>
                    <InfoRow $link $h={33}><IconBox><Plus {...s}/></IconBox>Add CONTRIBUTING</InfoRow>
                    <DevOps>Auto DevOps enabled</DevOps>
                    <InfoRow $link $mt={5}><IconBox><Plus {...s}/></IconBox>Add Kubernetes cluster</InfoRow>
                    <InfoRow $link $h={33}><IconBox><Plus {...s}/></IconBox>Add Wiki</InfoRow>
                    <InfoRow $link $h={33}><IconBox><Plus {...s}/></IconBox>Configure Integrations</InfoRow>
                    <InfoRule $m="12px 0 8px"/>
                    <InfoHead>Created on</InfoHead>
                  </RightCol>
                </Columns>
              </Body>
            </Main>
          </Gitlab>
        </Browser>
      </Desktop>
      <StatusBar>
        {["hd","cd","audio","net","usb","folder","disp","cap","v"].map(k=><Tiny key={k} kind={k}/>)}
        <Blacky/>
        <Tiny kind="globe"/><Tiny kind="down"/>
        <CtrlText>Right Ctrl</CtrlText>
      </StatusBar>
    </Screen>
  );
}
